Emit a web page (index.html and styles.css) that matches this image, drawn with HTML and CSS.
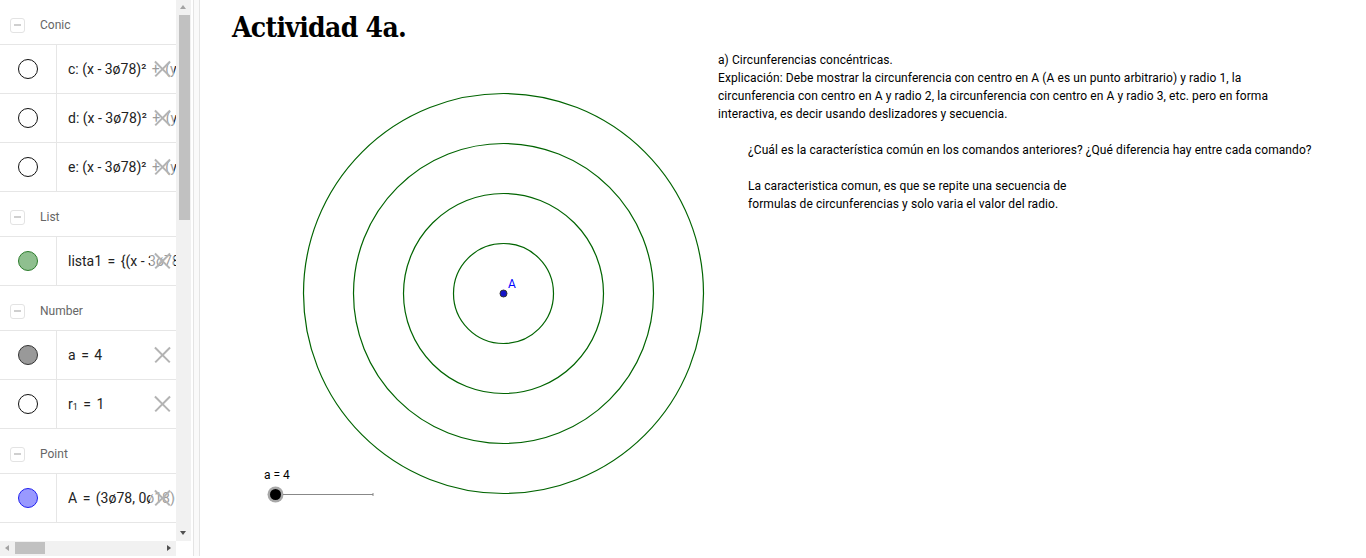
FILE: index.html
```html
<!DOCTYPE html>
<html lang="es">
<head>
<meta charset="utf-8">
<title>Actividad 4a.</title>
<link rel="stylesheet" href="styles.css">
</head>
<body>
<div class="app">
  <div class="algebra">
    <div class="av-list">
      <div class="av-header"><span class="toggle"><span class="minus"></span></span><span class="group-name">Conic</span></div>
      <div class="av-row"><div class="marble"><span class="dot dot-empty"></span></div><div class="expr">c: (x - 3ø78)²<span class="op">+</span>(y - 0ø18)²<span class="eq">=</span>9</div><span class="del"></span></div>
      <div class="av-row"><div class="marble"><span class="dot dot-empty"></span></div><div class="expr">d: (x - 3ø78)²<span class="op">+</span>(y - 0ø18)²<span class="eq">=</span>16</div><span class="del"></span></div>
      <div class="av-row"><div class="marble"><span class="dot dot-empty"></span></div><div class="expr">e: (x - 3ø78)²<span class="op">+</span>(y - 0ø18)²<span class="eq">=</span>4</div><span class="del"></span></div>
      <div class="av-header"><span class="toggle"><span class="minus"></span></span><span class="group-name">List</span></div>
      <div class="av-row"><div class="marble"><span class="dot dot-list"></span></div><div class="expr">lista1<span class="eq">=</span>{(x - 3ø78)²<span class="op">+</span>(y - 0ø18)²<span class="eq">=</span>1}</div><span class="del"></span></div>
      <div class="av-header"><span class="toggle"><span class="minus"></span></span><span class="group-name">Number</span></div>
      <div class="av-row"><div class="marble"><span class="dot dot-num"></span></div><div class="expr">a<span class="eq">=</span>4</div><span class="del"></span></div>
      <div class="av-row"><div class="marble"><span class="dot dot-empty"></span></div><div class="expr">r<sub>1</sub><span class="eq">=</span>1</div><span class="del"></span></div>
      <div class="av-header"><span class="toggle"><span class="minus"></span></span><span class="group-name">Point</span></div>
      <div class="av-row"><div class="marble"><span class="dot dot-point"></span></div><div class="expr">A<span class="eq">=</span>(3ø78, 0ø18)</div><span class="del"></span></div>
      <div class="av-header"><span class="toggle"><span class="minus"></span></span><span class="group-name">Auxiliary Objects</span></div>
    </div>
    <div class="vscroll">
      <span class="arrow arrow-up"></span>
      <span class="vthumb"></span>
      <span class="arrow arrow-down"></span>
    </div>
    <div class="hscroll">
      <span class="arrow arrow-left"></span>
      <span class="hthumb"></span>
      <span class="arrow arrow-right"></span>
    </div>
    <div class="corner"></div>
  </div>
  <div class="divider"></div>
  <div class="graphics">
    <svg class="canvas" width="1166" height="558" viewBox="200 0 1166 558" xmlns="http://www.w3.org/2000/svg">
      <g fill="none" stroke="#006400" stroke-width="1.2">
        <circle cx="503.5" cy="293.5" r="50"/>
        <circle cx="503.5" cy="293.5" r="100"/>
        <circle cx="503.5" cy="293.5" r="150"/>
        <circle cx="503.5" cy="293.5" r="200"/>
      </g>
      <circle cx="503.5" cy="293.5" r="3.5" fill="#1515c8" stroke="#333" stroke-width="1"/>
      <text x="508" y="288" class="pt-label">A</text>
      <text x="264" y="479" class="slider-label">a = 4</text>
      <line x1="283" y1="494.5" x2="373" y2="494.5" stroke="#888" stroke-width="1"/>
      <line x1="373" y1="493" x2="373" y2="496" stroke="#888" stroke-width="1"/>
      <circle cx="275.5" cy="494.5" r="8" fill="#8a8a8a" fill-opacity="0.75"/>
      <circle cx="275.5" cy="494.5" r="5.5" fill="#000"/>
    </svg>
    <h1 class="title">Actividad 4a.</h1>
    <div class="note">
      <div class="line">a) Circunferencias concéntricas.</div>
      <div class="line">Explicación: Debe mostrar la circunferencia con centro en A (A es un punto arbitrario) y radio 1, la</div>
      <div class="line">circunferencia con centro en A y radio 2, la circunferencia con centro en A y radio 3, etc. pero en forma</div>
      <div class="line">interactiva, es decir usando deslizadores y secuencia.</div>
      <div class="line blank"></div>
      <div class="line indent">¿Cuál es la característica común en los comandos anteriores? ¿Qué diferencia hay entre cada comando?</div>
      <div class="line blank"></div>
      <div class="line indent">La caracteristica comun, es que se repite una secuencia de</div>
      <div class="line indent">formulas de circunferencias y solo varia el valor del radio.</div>
    </div>
  </div>
</div>
</body>
</html>
```

FILE: styles.css
```css
* { box-sizing: border-box; }
html, body { margin: 0; padding: 0; background: #fff; }
body { font-family: Roboto, "Liberation Sans", sans-serif; color: #333; }

.app {
  display: flex;
  width: 1366px;
  height: 558px;
  overflow: hidden;
}

/* ---------- algebra view ---------- */
.algebra {
  flex: 0 0 191px;
  display: grid;
  grid-template-columns: 176px 15px;
  grid-template-rows: 541px 15px;
  height: 556px;
}
.av-list {
  overflow: hidden;
  background: #fff;
}
.av-header {
  height: 45px;
  border-bottom: 1px solid #e6e6e6;
  display: flex;
  align-items: center;
  padding-left: 10px;
  padding-top: 6px;
}
.toggle {
  width: 15px;
  height: 15px;
  border: 1px solid #e3e3e3;
  border-radius: 3px;
  display: flex;
  align-items: center;
  justify-content: center;
}
.minus {
  width: 7px;
  height: 2px;
  background: #cfcfcf;
}
.group-name {
  margin-left: 15px;
  font-size: 12px;
  color: #666;
  white-space: nowrap;
}
.av-row {
  height: 49px;
  border-bottom: 1px solid #e6e6e6;
  display: flex;
  align-items: center;
  position: relative;
}
.marble {
  flex: 0 0 57px;
  height: 100%;
  border-right: 1px solid #e6e6e6;
  display: flex;
  align-items: center;
  justify-content: center;
}
.dot {
  width: 20px;
  height: 20px;
  border-radius: 50%;
  border: 1px solid #111;
  background: #fff;
}
.dot-list { background: #8fbf8f; border-color: #2d7d2d; }
.dot-num { background: #999; border-color: #333; }
.dot-point { background: #9999ff; border-color: #2020ee; }
.expr {
  padding-left: 11px;
  font-size: 14px;
  color: #222;
  white-space: nowrap;
}
.eq { margin: 0 5.5px; }
.op { margin: 0 5.5px; }
.expr sub { font-size: 9px; vertical-align: -1px; }
.del {
  position: absolute;
  left: 150px;
  top: 50%;
  width: 24px;
  height: 22px;
  margin-top: -11px;
  background: rgba(255,255,255,0.55);
}
.del::before, .del::after {
  content: "";
  position: absolute;
  left: 2px;
  top: 10px;
  width: 21px;
  height: 1.6px;
  background: #b3b3b3;
  transform: rotate(45deg);
}
.del::after { transform: rotate(-45deg); }

/* scrollbars */
.vscroll {
  background: #f1f1f1;
  position: relative;
}
.vthumb {
  position: absolute;
  left: 3px;
  top: 15px;
  width: 11px;
  height: 205px;
  background: #c1c1c1;
}
.hscroll {
  background: #f1f1f1;
  position: relative;
}
.hthumb {
  position: absolute;
  left: 15px;
  top: 1px;
  width: 30px;
  height: 12px;
  background: #c1c1c1;
}
.corner { background: #fff; }
.arrow {
  position: absolute;
  width: 0;
  height: 0;
  border-style: solid;
}
.arrow-up {
  left: 4px; top: 5px;
  border-width: 0 3.5px 4px 3.5px;
  border-color: transparent transparent #a3a3a3 transparent;
}
.arrow-down {
  left: 4px; bottom: 6px;
  border-width: 4px 3.5px 0 3.5px;
  border-color: #505050 transparent transparent transparent;
}
.arrow-left {
  left: 5px; top: 4px;
  border-width: 3.5px 4px 3.5px 0;
  border-color: transparent #a3a3a3 transparent transparent;
}
.arrow-right {
  left: 167px; top: 4px;
  border-width: 3.5px 0 3.5px 4px;
  border-color: transparent transparent transparent #505050;
}

.divider {
  flex: 0 0 7px;
  margin-left: 2px;
  height: 556px;
  border-left: 1px solid #e4e4e4;
  border-right: 1px solid #e4e4e4;
  background: #fafafa;
}

/* ---------- graphics view ---------- */
.graphics {
  flex: 1;
  position: relative;
  height: 556px;
}
.canvas {
  position: absolute;
  left: 0;
  top: 0;
}
.pt-label {
  font-family: Roboto, "Liberation Sans", sans-serif;
  font-size: 12px;
  fill: #0000ff;
}
.slider-label {
  font-family: Roboto, "Liberation Sans", sans-serif;
  font-size: 12px;
  fill: #000;
}
.title {
  position: absolute;
  left: 32px;
  top: 10px;
  margin: 0;
  font-family: "DejaVu Serif", serif;
  font-stretch: condensed;
  font-weight: bold;
  font-size: 28px;
  letter-spacing: -0.7px;
  line-height: 36px;
  color: #000;
  white-space: nowrap;
}
.note {
  position: absolute;
  left: 518px;
  top: 51px;
  font-family: Roboto, "Liberation Sans", sans-serif;
  font-stretch: 89%;
  font-size: 12px;
  letter-spacing: 0.08px;
  line-height: 18px;
  color: #000;
}
.line { white-space: nowrap; height: 18px; }
.indent { padding-left: 30px; }
```
